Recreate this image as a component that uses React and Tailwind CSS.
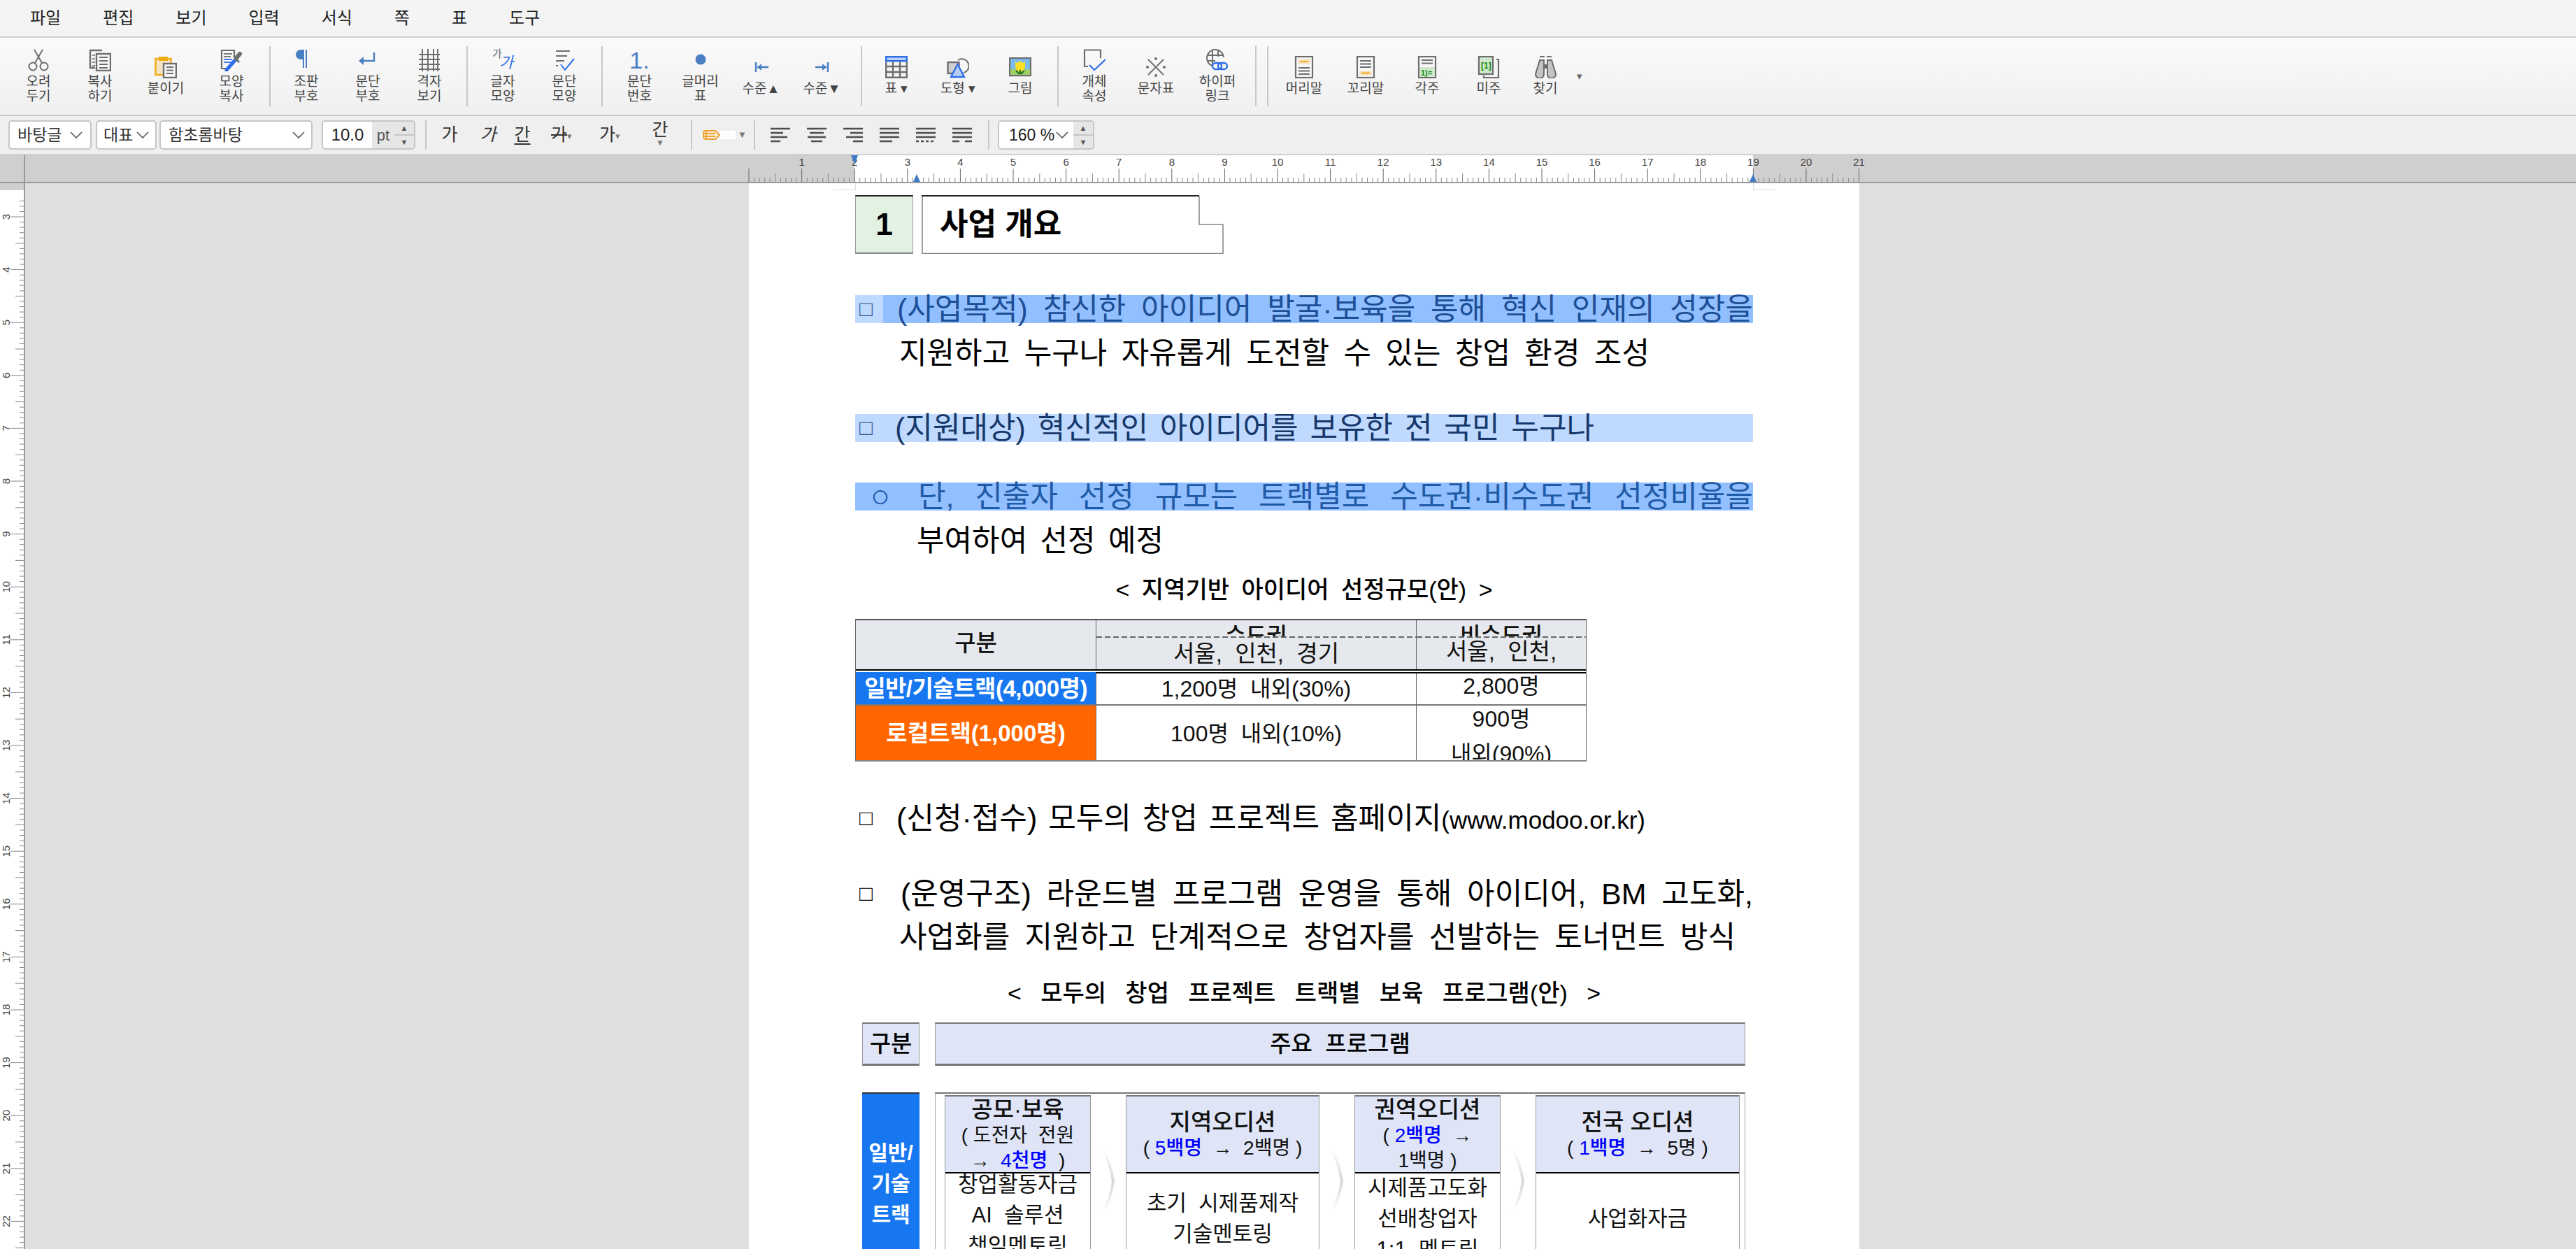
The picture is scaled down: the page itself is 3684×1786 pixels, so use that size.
import React from "react";

const G = "#6e6e6e";
const B = "#4a7fc4";
const BB = "#2f6fe8";

const Svg = ({ children, w = 32, h = 32 }) => (
  <svg width={w} height={h} viewBox={`0 0 ${w} ${h}`} fill="none">
    {children}
  </svg>
);

const Lines = ({ x, y, w, n, gap = 5, color = G, sw = 2 }) => (
  <>
    {Array.from({ length: n }).map((_, i) => (
      <path key={i} d={`M${x} ${y + i * gap}h${w}`} stroke={color} strokeWidth={sw} />
    ))}
  </>
);

const Scissors = () => (
  <Svg>
    <g stroke={G} strokeWidth="2">
      <circle cx="8" cy="25" r="5.5" />
      <circle cx="24" cy="25" r="5.5" />
      <path d="M11 20 22 1M21 20 10 1" />
    </g>
  </Svg>
);
const CopyIcon = () => (
  <Svg>
    <path d="M19 2H2v25h7" stroke={G} strokeWidth="2.4" />
    <rect x="11" y="7" width="20" height="24" fill="#f7f7f7" stroke={G} strokeWidth="2.4" />
    <Lines x={15} y={12} w={12} n={4} gap={5} />
    <Lines x={5} y={9} w={4} n={4} gap={5} sw={1.6} />
  </Svg>
);
const PasteIcon = () => (
  <Svg>
    <rect x="1.5" y="4" width="22" height="23" fill="#f5e3c4" stroke="#efab12" strokeWidth="2.4" />
    <rect x="6" y="1" width="13" height="6" fill="#efab12" />
    <rect x="13" y="11" width="18" height="20" fill="#f7f7f7" stroke={G} strokeWidth="2.4" />
    <Lines x={17} y={16} w={10} n={3} gap={4.5} />
  </Svg>
);
const FormatCopy = () => (
  <Svg>
    <path d="M20 12V2H2v26h7" stroke={G} strokeWidth="2.2" />
    <Lines x={5} y={7} w={12} n={1} sw={1.8} />
    <Lines x={5} y={11} w={10} n={1} sw={1.8} />
    <Lines x={5} y={15} w={12} n={2} gap={4} sw={1.8} color={BB} />
    <path d="M9 30 22 15" stroke={BB} strokeWidth="5" strokeLinecap="round" />
    <path d="M20 12 27 19" stroke={G} strokeWidth="3" />
    <path d="M23 13 28 7" stroke={G} strokeWidth="6" strokeLinecap="round" />
  </Svg>
);
const Pilcrow = () => (
  <Svg>
    <path d="M12 1H8a7 7 0 0 0 0 14h4z" fill={B} />
    <path d="M12 1v26M16 1v26" stroke={B} strokeWidth="2" />
  </Svg>
);
const ReturnIcon = () => (
  <Svg>
    <path d="M25 5v12H8" stroke={B} strokeWidth="2.4" />
    <path d="M10 11v12l-7-6z" fill={B} />
  </Svg>
);
const GridIcon = () => (
  <Svg>
    <path d="M1 8h30M1 15h30M1 22h30M1 29h30M6 0v32M14 0v32M22 0v32M28 0v32" stroke={G} strokeWidth="2" />
  </Svg>
);
const CharIcon = () => (
  <span className="relative block w-[32px] h-[32px]">
    <span className="absolute left-[1px] top-[-1px] text-[15px] leading-[16px] text-[#666]">가</span>
    <span className="absolute left-[11px] top-[8px] text-[22px] leading-[24px] italic text-[#2f6fe8]">가</span>
  </span>
);
const ParaIcon = () => (
  <Svg>
    <Lines x={4} y={3} w={20} n={1} />
    <Lines x={4} y={10} w={16} n={1} />
    <Lines x={4} y={17} w={12} n={1} />
    <path d="M4 24h3" stroke={G} strokeWidth="2" />
    <path d="M11 22l6 8 13-16" stroke={BB} strokeWidth="2" />
  </Svg>
);
const DotIcon = () => (
  <Svg>
    <ellipse cx="16" cy="15" rx="7.5" ry="7.5" fill={B} />
  </Svg>
);
const LevelUp = () => (
  <Svg h={16}>
    <path d="M8 1v14" stroke={B} strokeWidth="2.4" />
    <path d="M10 8h16" stroke={B} strokeWidth="2.6" />
    <path d="M10 8l6-5v10z" fill={B} />
  </Svg>
);
const LevelDown = () => (
  <Svg h={16}>
    <path d="M24 1v14" stroke={B} strokeWidth="2.4" />
    <path d="M6 8h16" stroke={B} strokeWidth="2.6" />
    <path d="M22 8l-6-5v10z" fill={B} />
  </Svg>
);
const TableIcon = () => (
  <Svg>
    <rect x="1.2" y="1.2" width="29.6" height="6" fill="#b9d0fb" stroke={BB} strokeWidth="2.4" />
    <path d="M1.2 8v22.8h29.6V8M1.2 15h29.6M1.2 23h29.6M11 8v22M21 8v22" stroke={G} strokeWidth="2.4" />
  </Svg>
);
const ShapeIcon = () => (
  <Svg>
    <rect x="1.5" y="9" width="16" height="16" fill="#cfcfcf" stroke={G} strokeWidth="2.4" />
    <path d="M16 6a10 10 0 1 1 8 18" stroke={G} strokeWidth="2" />
    <path d="M15.500 12 6 30h19z" fill="#b8cdf6" stroke={BB} strokeWidth="2.4" />
  </Svg>
);
const PictureIcon = () => (
  <Svg h={28}>
    <rect x="1" y="1" width="30" height="25" fill="#7bbcf0" stroke={G} strokeWidth="2.4" />
    <rect x="2" y="17" width="28" height="8" fill="#9fd06a" />
    <path d="M9 6l3 2 4-3 4 3 3-2v7a7 7 0 0 1-14 0z" fill="#fbe023" />
    <path d="M16 18v6M10 19l5 5M22 19l-5 5" stroke="#1d6b1d" strokeWidth="2" />
  </Svg>
);
const ObjectIcon = () => (
  <Svg>
    <path d="M25 13V1.500H2V25h5" stroke={G} strokeWidth="2.2" />
    <path d="M9 23l7 7L32 15" stroke={BB} strokeWidth="2.2" />
  </Svg>
);
const SymbolIcon = () => (
  <Svg>
    <path d="M5 5l22 22M27 5 5 27" stroke={G} strokeWidth="1.8" />
    <circle cx="16" cy="4" r="2" fill={G} />
    <circle cx="16" cy="28" r="2" fill={G} />
    <circle cx="4" cy="16" r="2" fill={G} />
    <circle cx="28" cy="16" r="2" fill={G} />
  </Svg>
);
const LinkIcon = () => (
  <Svg>
    <g stroke={G} strokeWidth="2">
      <path d="M13 25a12 12 0 1 1 12-13" />
      <path d="M1 9h24M1 17h12M9 1v23M17 1v10" />
    </g>
    <rect x="9" y="20" width="13" height="9" rx="4.5" fill="#f5f5f5" stroke={BB} strokeWidth="2.4" />
    <rect x="17" y="20" width="13" height="9" rx="4.5" stroke={BB} strokeWidth="2.4" />
  </Svg>
);
const HeaderIcon = () => (
  <Svg>
    <rect x="4" y="1" width="24" height="30" fill="#f8f8f8" stroke={G} strokeWidth="2.2" />
    <rect x="7" y="4" width="18" height="8" fill="#f6e4c8" />
    <path d="M10 8h12" stroke="#efab12" strokeWidth="2" />
    <Lines x={8} y={17} w={16} n={3} gap={4.5} />
  </Svg>
);
const FooterIcon = () => (
  <Svg>
    <rect x="4" y="1" width="24" height="30" fill="#f8f8f8" stroke={G} strokeWidth="2.2" />
    <Lines x={8} y={7} w={16} n={3} gap={4.5} />
    <rect x="7" y="21" width="18" height="7" fill="#f6e4c8" />
    <path d="M10 24.500h12" stroke="#efab12" strokeWidth="2" />
  </Svg>
);
const FootnoteIcon = () => (
  <Svg>
    <rect x="4" y="1" width="24" height="30" fill="#f8f8f8" stroke={G} strokeWidth="2.2" />
    <Lines x={8} y={6} w={16} n={2} gap={4.5} />
    <rect x="5" y="16" width="22" height="14" fill="#cfe7cc" />
    <text x="7" y="28" fontSize="11" fontWeight="700" fill="#0b8a0b">1)=</text>
  </Svg>
);
const EndnoteIcon = () => (
  <Svg>
    <path d="M27 5h3v26H9v-3" stroke={G} strokeWidth="2.2" />
    <rect x="2" y="1" width="20" height="25" fill="#cfe7cc" stroke={G} strokeWidth="2.2" />
    <text x="5" y="18" fontSize="12" fontWeight="700" fill="#0b8a0b">[1]</text>
  </Svg>
);
const BinocIcon = () => (
  <Svg>
    <path d="M8 1h7M18 1h7" stroke={G} strokeWidth="2" />
    <path d="M8 6h6v20a5 5 0 0 1-12 0zM19 6h6l6 20a5 5 0 0 1-12 0z" fill="#c4c4c4" stroke={G} strokeWidth="2" />
    <path d="M14 12h5v6h-5z" fill={G} />
  </Svg>
);

const Sep = ({ className = "" }) => <div className={`w-[2px] h-[86px] bg-[#c8c8c8] shrink-0 ${className}`} />;

const Btn = ({ icon, label, className = "w-[88px]" }) => (
  <div className={`shrink-0 flex flex-col items-center justify-center gap-[4px] ${className}`}>
    <span className="w-[32px] h-[32px] flex items-center justify-center">{icon}</span>
    <span className="text-[19px] leading-[21.5px] text-[#444] text-center whitespace-pre-line">{label}</span>
  </div>
);

const Chevron = () => (
  <svg width="18" height="10" viewBox="0 0 18 10" fill="none" className="shrink-0">
    <path d="M1 1l8 8 8-8" stroke="#555" strokeWidth="1.6" />
  </svg>
);

const Select = ({ children, className }) => (
  <div className={`h-[42px] bg-white border-2 border-[#c6c6c6] rounded-[5px] flex items-center justify-between text-[23px] text-[#333] shrink-0 ${className}`}>
    {children}
    <Chevron />
  </div>
);

const Spin = () => (
  <div className="w-[28px] h-full flex flex-col bg-[#e6e6e6] text-[#555] text-[11px] leading-none shrink-0">
    <span className="flex-1 flex items-center justify-center border-b-2 border-[#c6c6c6]">▲</span>
    <span className="flex-1 flex items-center justify-center">▼</span>
  </div>
);

const AlignIcon = ({ d }) => (
  <div className="w-[52px] flex justify-center shrink-0">
    <svg width="30" height="24" viewBox="0 0 30 24" fill="none">
      <path d={d} stroke="#4e4e4e" strokeWidth="2.6" />
    </svg>
  </div>
);

const CM = 75.6;

const TopRuler = () => (
  <svg width="3684" height="38" viewBox="0 0 3684 38" className="block">
    <rect width="3684" height="38" fill="#cfcfcf" />
    <rect x="1222" width="1285" height="38" fill="#fff" />
    <path d="M35 0v38" stroke="#999" strokeWidth="2" />
    {Array.from({ length: 211 }).map((_, i) => {
      const x = 1071 + (i * CM) / 10;
      const top = i % 10 === 0 ? 19 : i % 5 === 0 ? 26 : 32;
      return <path key={i} d={`M${x} ${top}V38`} stroke={i % 10 === 0 ? "#666" : "#888"} strokeWidth="1" />;
    })}
    {Array.from({ length: 21 }).map((_, i) => (
      <text key={i} x={1071 + (i + 1) * CM} y="15" textAnchor="middle" fontSize="15" fill="#444">
        {i + 1}
      </text>
    ))}
    <path d="M1217 0h10l-5 13z" fill="#3d7cc4" />
    <path d="M1311 27l5 11h-10z" fill="#3d7cc4" />
    <path d="M2507 27l5 11h-10z" fill="#3d7cc4" />
  </svg>
);

const SideRuler = () => (
  <svg width="34" height="1524" viewBox="0 0 34 1524" className="block shrink-0">
    <rect width="34" height="1524" fill="#fff" />
    <rect width="34" height="10" fill="#cfcfcf" />
    {Array.from({ length: 205 }).map((_, i) => {
      const y = 48 + ((i - 3) * CM) / 10;
      const k = i % 10;
      const left = k === 3 ? 15 : k === 8 ? 22 : 28;
      return <path key={i} d={`M${left} ${y}H34`} stroke="#888" strokeWidth="1" />;
    })}
    {Array.from({ length: 20 }).map((_, i) => {
      const y = 48 + i * CM;
      return (
        <text key={i} x="0" y="0" transform={`translate(14 ${y}) rotate(-90)`} textAnchor="middle" fontSize="15" fill="#444">
          {i + 3}
        </text>
      );
    })}
  </svg>
);

const Arrow = () => (
  <div className="w-[50px] shrink-0 pt-[76px] flex justify-center">
    <svg width="22" height="94" viewBox="0 0 22 94" fill="none">
      <defs>
        <linearGradient id="chev" x1="0" y1="0" x2="0" y2="1">
          <stop offset="0" stopColor="#fff" />
          <stop offset="0.5" stopColor="#d8d8d8" />
          <stop offset="1" stopColor="#fff" />
        </linearGradient>
      </defs>
      <path d="M3 2c8 14 13 30 15 45-2 15-7 31-15 45" stroke="url(#chev)" strokeWidth="4" />
    </svg>
  </div>
);

const Stage = ({ className, head, sub, body, bodyClass = "" }) => (
  <div className={`shrink-0 border border-[#999] border-t-2 border-t-[#777] ${className}`}>
    <div className="h-[110px] bg-[#dfe5f7] border-b-2 border-black flex flex-col items-center justify-center">
      <div className="text-[33px] leading-[39px] font-medium text-[#111]">{head}</div>
      {sub.map((s, i) => (
        <div key={i} className="text-[28px] leading-[36px] text-[#111] whitespace-pre">
          {s}
        </div>
      ))}
    </div>
    <div className={`h-[130px] bg-white flex flex-col items-center justify-center text-[31px] leading-[44px] text-[#111] ${bodyClass}`}>
      {body.map((b, i) => (
        <div key={i} className="whitespace-pre">
          {b}
        </div>
      ))}
    </div>
  </div>
);

const Blue = ({ children }) => <span className="text-[#0000ff] font-medium">{children}</span>;

const TEXT = "h-[40px] leading-[40px] text-[43px] [text-align-last:justify] whitespace-nowrap";
const CAPTION = "h-[40px] leading-[40px] text-[34px] font-medium mx-auto [text-align-last:justify] whitespace-nowrap";
const DASH = "h-[2px] bg-[repeating-linear-gradient(90deg,#666_0_8px,transparent_8px_12px)]";

const App = () => {
  return (
    <div className="w-[3684px] h-[1786px] overflow-hidden bg-[#e0dedf] font-['Liberation_Sans','Noto_Sans_CJK_KR',sans-serif] text-black">
      {/* menu */}
      <div className="h-[54px] bg-[#f4f4f4] border-b-2 border-[#cfcfcf] flex items-center gap-[60px] pl-[43px] text-[24px] text-[#222]">
        {["파일", "편집", "보기", "입력", "서식", "쪽", "표", "도구"].map((m) => (
          <span key={m}>{m}</span>
        ))}
      </div>

      {/* toolbar */}
      <div className="h-[112px] bg-gradient-to-b from-[#fafafa] to-[#f0f0f0] border-b-2 border-[#cbcbcb] flex items-center pl-[11px]">
        <Btn icon={<Scissors />} label={"오려\n두기"} />
        <Btn icon={<CopyIcon />} label={"복사\n하기"} />
        <Btn icon={<PasteIcon />} label="붙이기" className="w-[100px]" />
        <Btn icon={<FormatCopy />} label={"모양\n복사"} />
        <Sep className="ml-[10px] mr-[7px]" />
        <Btn icon={<Pilcrow />} label={"조판\n부호"} />
        <Btn icon={<ReturnIcon />} label={"문단\n부호"} />
        <Btn icon={<GridIcon />} label={"격자\n보기"} />
        <Sep className="ml-[9px] mr-[6px]" />
        <Btn icon={<CharIcon />} label={"글자\n모양"} />
        <Btn icon={<ParaIcon />} label={"문단\n모양"} />
        <Sep className="ml-[9px] mr-[9px]" />
        <Btn
          icon={<span className="text-[34px] leading-[32px] text-[#4a7fc4]">1.</span>}
          label={"문단\n번호"}
          className="w-[87px]"
        />
        <Btn icon={<DotIcon />} label={"글머리\n표"} className="w-[87px]" />
        <Btn icon={<LevelUp />} label="수준▲" className="w-[87px]" />
        <Btn icon={<LevelDown />} label="수준▼" className="w-[87px]" />
        <Sep className="ml-[12px] mr-[5px]" />
        <Btn icon={<TableIcon />} label="표 ▾" />
        <Btn icon={<ShapeIcon />} label="도형 ▾" />
        <Btn icon={<PictureIcon />} label="그림" className="w-[90px]" />
        <Sep className="ml-[8px] mr-[7px]" />
        <Btn icon={<ObjectIcon />} label={"개체\n속성"} />
        <Btn icon={<SymbolIcon />} label="문자표" />
        <Btn icon={<LinkIcon />} label={"하이퍼\n링크"} />
        <Sep className="ml-[10px] mr-[15px]" />
        <Sep className="mr-[7px]" />
        <Btn icon={<HeaderIcon />} label="머리말" />
        <Btn icon={<FooterIcon />} label="꼬리말" />
        <Btn icon={<FootnoteIcon />} label="각주" />
        <Btn icon={<EndnoteIcon />} label="미주" />
        <Btn icon={<BinocIcon />} label="찾기" className="w-[74px]" />
        <span className="ml-[8px] text-[15px] text-[#666]">▾</span>
      </div>

      {/* format bar */}
      <div className="h-[56px] bg-[#efefef] border-b-2 border-[#cfcfcf] flex items-center pl-[12px]">
        <Select className="w-[119px] px-[11px]">바탕글</Select>
        <Select className="w-[87px] ml-[6px] px-[9px]">대표</Select>
        <Select className="w-[219px] ml-[4px] pl-[11px] pr-[9px]">함초롬바탕</Select>
        <div className="ml-[13px] w-[134px] h-[42px] border-2 border-[#c6c6c6] rounded-[5px] flex overflow-hidden shrink-0">
          <span className="w-[70px] bg-white text-[24px] flex items-center justify-center text-[#222]">10.0</span>
          <span className="flex-1 bg-[#e6e6e6] text-[22px] text-[#555] flex items-center justify-center">pt</span>
          <Spin />
        </div>
        <div className="ml-[14px] w-[2px] h-[42px] bg-[#c8c8c8] shrink-0" />
        <span className="w-[66px] text-center text-[25px] text-[#333] shrink-0">가</span>
        <span className="w-[44px] text-center text-[25px] italic text-[#333] shrink-0">가</span>
        <span className="w-[54px] text-center text-[25px] text-[#333] underline underline-offset-4 shrink-0">간</span>
        <span className="w-[71px] pl-[14px] text-[25px] text-[#333] line-through shrink-0">
          가<span className="inline-block text-[13px] text-[#777] align-middle">▾</span>
        </span>
        <span className="w-[70px] pl-[12px] text-[25px] text-[#333] shrink-0">
          가<span className="text-[13px] text-[#777] align-middle">▾</span>
        </span>
        <span className="w-[58px] flex flex-col items-center text-[25px] leading-[26px] text-[#333] -mt-[4px] shrink-0">
          간<span className="text-[12px] leading-[12px] text-[#777]">▼</span>
        </span>
        <div className="ml-[15px] w-[2px] h-[42px] bg-[#c8c8c8] shrink-0" />
        <div className="w-[88px] flex items-center pl-[14px] shrink-0">
          <svg width="26" height="14" viewBox="0 0 26 14" fill="none">
            <path d="M5 1h14l6 6-6 6H5a3 3 0 0 1-3-3V4a3 3 0 0 1 3-3z" fill="#fbeed8" />
            <path d="M5 1h14l6 6-6 6H5a3 3 0 0 1-3-3V4a3 3 0 0 1 3-3zM6 1v12M2 5h17M2 9h17" stroke="#eba22e" strokeWidth="1.8" />
          </svg>
          <span className="w-[22px] h-[12px] bg-white" />
          <span className="ml-[3px] text-[13px] text-[#777]">▼</span>
        </div>
        <div className="w-[2px] h-[42px] bg-[#c8c8c8] shrink-0" />
        <div className="ml-[10px] flex shrink-0">
          <AlignIcon d="M1 3h28M1 9h18M1 15h24M1 21h14" />
          <AlignIcon d="M1 3h28M5 9h20M2 15h26M7 21h16" />
          <AlignIcon d="M1 3h28M11 9h18M5 15h24M15 21h14" />
          <AlignIcon d="M1 3h28M1 9h28M1 15h28M1 21h18" />
          <AlignIcon d="M1 3h28M1 9h28M1 15h28M1 21h4M8 21h4M15 21h4M22 21h4" />
          <AlignIcon d="M1 3h28M1 9h28M1 15h28M1 21h10M19 21h10" />
        </div>
        <div className="ml-[11px] w-[2px] h-[42px] bg-[#c8c8c8] shrink-0" />
        <div className="ml-[12px] w-[138px] h-[42px] border-2 border-[#c6c6c6] rounded-[5px] flex overflow-hidden shrink-0">
          <span className="flex-1 bg-white flex items-center justify-between pl-[14px] pr-[7px] text-[23px] text-[#222] whitespace-nowrap">
            160 %
            <Chevron />
          </span>
          <Spin />
        </div>
      </div>

      {/* ruler */}
      <div className="h-[40px] border-b-2 border-[#999]">
        <TopRuler />
      </div>

      <div className="flex h-[1524px]">
        <div className="border-r-2 border-[#999] shrink-0">
          <SideRuler />
        </div>

        {/* page */}
        <div className="relative ml-[1035px] w-[1588px] h-[1524px] bg-white px-[152px] overflow-hidden">
          <div className="absolute left-[121px] top-[9px] w-[31px] h-px bg-[#dcdcdc]" />
          <div className="absolute left-[152px] top-0 w-px h-[10px] bg-[#dcdcdc]" />
          <div className="absolute left-[1437px] top-[9px] w-[31px] h-px bg-[#dcdcdc]" />
          <div className="absolute left-[1436px] top-0 w-px h-[10px] bg-[#dcdcdc]" />

          <div className="flex gap-[12px] pt-[17px]">
            <div className="w-[83px] h-[84px] bg-[#e2f2e2] border border-[#999] border-t-2 border-t-[#222] border-b-2 border-b-[#888] flex items-center justify-center text-[44px] font-bold">
              1
            </div>
            <div className="relative w-[432px] h-[84px] flex items-center pl-[26px] text-[44px] font-bold">
              <svg className="absolute inset-0" width="432" height="84" viewBox="0 0 432 84" fill="none">
                <path d="M397 1v41h34v41.500H1V1" stroke="#888" strokeWidth="1.600" />
                <path d="M0 1h397" stroke="#222" strokeWidth="2" />
              </svg>
              <span className="relative">사업 개요</span>
            </div>
          </div>

          <div className="mt-[59px] h-[40px] flex bg-[#92bfff]">
            <div className="w-[40px] bg-[#bfdaff] text-[#2f5691] text-[31px] leading-[40px] pl-[6px]">□</div>
            <div className={`${TEXT} ml-[20px] w-[1225px] text-[#1d4f96]`}>
              (사업목적) 참신한 아이디어 발굴·보육을 통해 혁신 인재의 성장을
            </div>
          </div>

          <div className={`${TEXT} mt-[23px] ml-[63px] w-[1073px]`}>지원하고 누구나 자유롭게 도전할 수 있는 창업 환경 조성</div>

          <div className="mt-[67px] h-[40px] flex bg-[#bfd9ff]">
            <div className="w-[57px] text-[#2f5691] text-[31px] leading-[40px] pl-[6px]">□</div>
            <div className={`${TEXT} w-[1000px] text-[#16386a]`}>(지원대상) 혁신적인 아이디어를 보유한 전 국민 누구나</div>
          </div>

          <div className="mt-[58px] h-[40px] flex bg-[#92bfff]">
            <div className="w-[90px] text-[#1f5aa6] text-[46px] leading-[38px] pl-[22px]">○</div>
            <div className={`${TEXT} w-[1195px] text-[#1f5aa6]`}>단, 진출자 선정 규모는 트랙별로 수도권·비수도권 선정비율을</div>
          </div>

          <div className={`${TEXT} mt-[23px] ml-[88px] w-[353px]`}>부여하여 선정 예정</div>

          <div className={`${CAPTION} mt-[30px] w-[539px]`}>{"< 지역기반 아이디어 선정규모(안) >"}</div>

          {/* region table */}
          <div className="mt-[22px] w-[1046px] h-[204px] border-x border-[#666] border-t-2 border-t-[#555] border-b-2 border-b-[#888] text-[32px] text-[#111] overflow-hidden">
            <div className="flex h-[70px] bg-[#e5e8ec]">
              <div className="w-[343px] flex items-center justify-center pb-[4px] text-[33px] font-medium shrink-0">구분</div>
              <div className="w-[458px] border-l border-[#666] shrink-0">
                <div className="h-[23px] overflow-hidden text-center leading-[44px] font-medium">수도권</div>
                <div className={DASH} />
                <div className="text-center text-[33px] leading-[46px] whitespace-pre">{"서울,  인천,  경기"}</div>
              </div>
              <div className="flex-1 border-l border-[#666]">
                <div className="h-[23px] overflow-hidden text-center leading-[44px] font-medium">비수도권</div>
                <div className={DASH} />
                <div className="text-center text-[33px] leading-[40px] whitespace-pre">{"서울,  인천,"}</div>
              </div>
            </div>
            <div className="flex h-[6px]">
              <div className="w-[343px] border-t-2 border-black border-b-2 border-b-[#1777f0] shrink-0" />
              <div className="flex-1 border-y-2 border-black" />
            </div>
            <div className="flex h-[46px] border-b-2 border-[#777]">
              <div className="w-[343px] bg-[#1777f0] text-white font-bold text-[33px] tracking-[-0.5px] flex items-center justify-center whitespace-nowrap shrink-0">일반/기술트랙(4,000명)</div>
              <div className="w-[458px] border-l border-[#666] flex items-center justify-center whitespace-pre shrink-0">1,200명  내외(30%)</div>
              <div className="flex-1 border-l border-[#666] flex justify-center leading-[36px]">2,800명</div>
            </div>
            <div className="flex h-[80px]">
              <div className="w-[343px] bg-[#ff6600] text-white font-bold text-[33px] flex items-center justify-center shrink-0">로컬트랙(1,000명)</div>
              <div className="w-[458px] border-l border-[#666] flex items-center justify-center whitespace-pre shrink-0">100명  내외(10%)</div>
              <div className="flex-1 border-l border-[#666] text-center leading-[50px] -mt-[6px]">
                900명
                <br />
                내외(90%)
              </div>
            </div>
          </div>

          <div className="mt-[61px] h-[40px] flex">
            <div className="w-[59px] text-[31px] leading-[40px] pl-[6px]">□</div>
            <div className={`${TEXT} w-[1071px]`}>
              (신청·접수) 모두의 창업 프로젝트 홈페이지<span className="text-[35px]">(www.modoo.or.kr)</span>
            </div>
          </div>

          <div className="mt-[68px] h-[40px] flex">
            <div className="w-[65px] text-[31px] leading-[40px] pl-[6px]">□</div>
            <div className={`${TEXT} w-[1221px]`}>(운영구조) 라운드별 프로그램 운영을 통해 아이디어, BM 고도화,</div>
          </div>

          <div className={`${TEXT} mt-[22px] ml-[63px] w-[1196px]`}>사업화를 지원하고 단계적으로 창업자를 선발하는 토너먼트 방식</div>

          <div className={`${CAPTION} mt-[40px] w-[848px]`}>{"< 모두의 창업 프로젝트 트랙별 보육 프로그램(안) >"}</div>

          {/* program table */}
          <div className="mt-[22px] ml-[10px] flex gap-[22px] h-[62px] text-[33px] font-medium">
            <div className="w-[82px] bg-[#dfe5f7] border border-[#999] border-t-2 border-t-[#777] border-b-[3px] border-b-[#777] flex items-center justify-center">구분</div>
            <div className="w-[1159px] bg-[#dfe5f7] border border-[#999] border-t-2 border-t-[#777] border-b-[3px] border-b-[#777] flex items-center justify-center whitespace-pre">주요  프로그램</div>
          </div>

          <div className="mt-[38px] ml-[10px] flex gap-[22px]">
            <div className="w-[82px] h-[300px] bg-[#1777f0] border-t-2 border-[#333] text-white font-bold text-[30px] leading-[44px] text-center pt-[63px] shrink-0">
              일반/
              <br />
              기술
              <br />
              트랙
            </div>
            <div className="w-[1159px] h-[300px] border border-[#aaa] border-t-2 border-t-[#777] pt-[2px] pl-[13px] flex items-start">
              <Stage
                className="w-[209px]"
                head="공모·보육"
                sub={[
                  "( 도전자  전원",
                  <span key="a">
                    →  <Blue>4천명</Blue>  )
                  </span>,
                ]}
                body={["창업활동자금", "AI  솔루션", "책임멘토링"]}
                bodyClass="pb-[10px]"
              />
              <Arrow />
              <Stage
                className="w-[277px]"
                head="지역오디션"
                sub={[
                  <span key="a">
                    ( <Blue>5백명</Blue>  →  2백명 )
                  </span>,
                ]}
                body={["초기  시제품제작", "기술멘토링"]}
              />
              <Arrow />
              <Stage
                className="w-[209px]"
                head="권역오디션"
                sub={[
                  <span key="a">
                    ( <Blue>2백명</Blue>  →
                  </span>,
                  "1백명 )",
                ]}
                body={["시제품고도화", "선배창업자", "1:1  멘토링"]}
              />
              <Arrow />
              <Stage
                className="w-[292px]"
                head="전국 오디션"
                sub={[
                  <span key="a">
                    ( <Blue>1백명</Blue>  →  5명 )
                  </span>,
                ]}
                body={["사업화자금"]}
              />
            </div>
          </div>
        </div>
      </div>
    </div>
  );
};

export default App;
